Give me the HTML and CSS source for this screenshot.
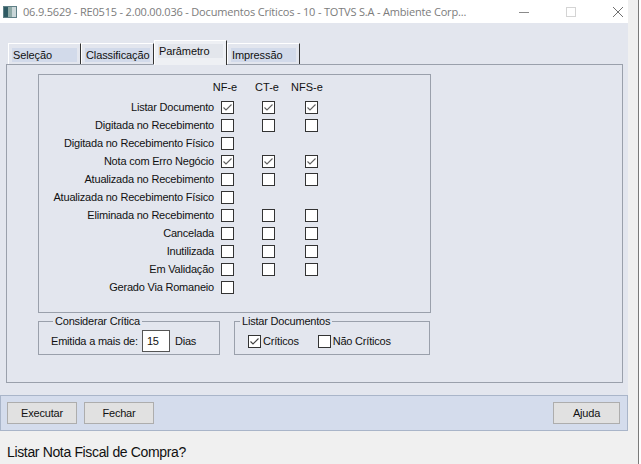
FILE: index.html
```html
<!DOCTYPE html>
<html lang="pt-BR">
<head>
<meta charset="utf-8">
<title>Documentos Críticos</title>
<link rel="stylesheet" href="styles.css">
</head>
<body>
<div class="screen">
  <div class="window">
    <div class="titlebar">
      <svg class="app-icon" width="14" height="12" viewBox="0 0 14 12">
        <rect x="0" y="0" width="14" height="12" fill="#5f7f86"/>
        <rect x="1" y="1" width="4" height="10" fill="#2f5a63"/>
        <rect x="5" y="1" width="4" height="10" fill="#8ea9a6"/>
        <rect x="9" y="1" width="4" height="10" fill="#c9d6d8"/>
      </svg>
      <span class="title">06.9.5629 - RE0515 - 2.00.00.036 - Documentos Críticos - 10 - TOTVS S.A - Ambiente Corp...</span>
      <div class="controls">
        <svg class="ctl" width="12" height="12" viewBox="0 0 12 12"><line x1="1" y1="6.5" x2="11" y2="6.5" stroke="#8a8a8a" stroke-width="1"/></svg>
        <svg class="ctl" width="12" height="12" viewBox="0 0 12 12"><rect x="1.5" y="1.5" width="9" height="9" fill="none" stroke="#d4d4d4" stroke-width="1"/></svg>
        <svg class="ctl" width="12" height="12" viewBox="0 0 12 12"><path d="M1 1 L11 11 M11 1 L1 11" stroke="#707070" stroke-width="1"/></svg>
      </div>
    </div>
    <div class="client">
      <div class="tabs">
        <div class="tab"><span class="tab-label">Seleção</span></div>
        <div class="tab"><span class="tab-label">Classificação</span></div>
        <div class="tab active"><span class="tab-label">Parâmetro</span></div>
        <div class="tab"><span class="tab-label">Impressão</span></div>
      </div>
      <div class="panel">
        <div class="group main-group">
          <div class="grid">
            <span></span>
            <span class="colhead"><span>NF-e</span></span>
            <span class="colhead"><span>CT-e</span></span>
            <span class="colhead"><span>NFS-e</span></span>

            <span class="lbl">Listar Documento</span>
            <span class="cb checked"><svg width="11" height="11" viewBox="0 0 11 11"><polyline points="1.5,5.5 4,8 9.5,2.5" fill="none" stroke="#606060" stroke-width="1.1"/></svg></span>
            <span class="cb checked"><svg width="11" height="11" viewBox="0 0 11 11"><polyline points="1.5,5.5 4,8 9.5,2.5" fill="none" stroke="#606060" stroke-width="1.1"/></svg></span>
            <span class="cb checked"><svg width="11" height="11" viewBox="0 0 11 11"><polyline points="1.5,5.5 4,8 9.5,2.5" fill="none" stroke="#606060" stroke-width="1.1"/></svg></span>

            <span class="lbl">Digitada no Recebimento</span>
            <span class="cb"></span><span class="cb"></span><span class="cb"></span>

            <span class="lbl">Digitada no Recebimento Físico</span>
            <span class="cb"></span><span></span><span></span>

            <span class="lbl">Nota com Erro Negócio</span>
            <span class="cb checked"><svg width="11" height="11" viewBox="0 0 11 11"><polyline points="1.5,5.5 4,8 9.5,2.5" fill="none" stroke="#606060" stroke-width="1.1"/></svg></span>
            <span class="cb checked"><svg width="11" height="11" viewBox="0 0 11 11"><polyline points="1.5,5.5 4,8 9.5,2.5" fill="none" stroke="#606060" stroke-width="1.1"/></svg></span>
            <span class="cb checked"><svg width="11" height="11" viewBox="0 0 11 11"><polyline points="1.5,5.5 4,8 9.5,2.5" fill="none" stroke="#606060" stroke-width="1.1"/></svg></span>

            <span class="lbl">Atualizada no Recebimento</span>
            <span class="cb"></span><span class="cb"></span><span class="cb"></span>

            <span class="lbl">Atualizada no Recebimento Físico</span>
            <span class="cb"></span><span></span><span></span>

            <span class="lbl">Eliminada no Recebimento</span>
            <span class="cb"></span><span class="cb"></span><span class="cb"></span>

            <span class="lbl">Cancelada</span>
            <span class="cb"></span><span class="cb"></span><span class="cb"></span>

            <span class="lbl">Inutilizada</span>
            <span class="cb"></span><span class="cb"></span><span class="cb"></span>

            <span class="lbl">Em Validação</span>
            <span class="cb"></span><span class="cb"></span><span class="cb"></span>

            <span class="lbl">Gerado Via Romaneio</span>
            <span class="cb"></span><span></span><span></span>
          </div>
        </div>
        <div class="bottom-groups">
          <fieldset class="fs fs-critica">
            <legend>Considerar Crítica</legend>
            <div class="fs-row">
              <span>Emitida a mais de:</span>
              <span class="input">15</span>
              <span class="dias">Dias</span>
            </div>
          </fieldset>
          <fieldset class="fs fs-listar">
            <legend>Listar Documentos</legend>
            <div class="fs-row">
              <span class="cb checked"><svg width="11" height="11" viewBox="0 0 11 11"><polyline points="1.5,5.5 4,8 9.5,2.5" fill="none" stroke="#404040" stroke-width="1.1"/></svg></span>
              <span class="opt">Críticos</span>
              <span class="cb second"></span>
              <span class="opt">Não Críticos</span>
            </div>
          </fieldset>
        </div>
      </div>
      <div class="buttonbar">
        <button class="btn">Executar</button>
        <button class="btn">Fechar</button>
        <span class="spacer"></span>
        <button class="btn btn-help">Ajuda</button>
      </div>
    </div>
    <div class="statusbar">
      <span class="status-text">Listar Nota Fiscal de Compra?</span>
    </div>
  </div>
  <div class="edge"></div>
</div>
</body>
</html>
```

FILE: styles.css
```css
* { box-sizing: border-box; }
html, body { margin: 0; padding: 0; }
body {
  width: 641px;
  height: 464px;
  overflow: hidden;
  background: #f0f0f0;
  font-family: "Liberation Sans", Arial, sans-serif;
  font-size: 11px;
  color: #111;
}
.screen {
  display: flex;
  width: 641px;
  height: 464px;
}
.window {
  width: 628px;
  height: 464px;
  display: flex;
  flex-direction: column;
}
.edge {
  width: 13px;
  height: 464px;
  background: #f0f0f0;
  border-right: 2px solid #fff;
  box-shadow: inset -1px 0 0 #7a7a7a;
}
.titlebar {
  height: 23px;
  background: #fff;
  display: flex;
  align-items: center;
  padding-left: 3px;
}
.app-icon { flex: none; margin-right: 6px; margin-top: 1px; }
.title {
  font-family: "Open Sans", "Noto Sans", sans-serif;
  font-size: 11px;
  letter-spacing: -0.18px;
  color: #7c7c7c;
  white-space: nowrap;
}
.controls {
  margin-left: auto;
  display: flex;
  align-items: center;
  gap: 35px;
  padding-right: 4px;
}
.ctl { display: block; }

.client {
  height: 408px;
  background: #e3e6ee;
  padding-top: 17px;
  display: flex;
  flex-direction: column;
}
.tabs {
  display: flex;
  align-items: flex-end;
  padding-left: 8px;
}
.tab {
  width: 73px;
  height: 21px;
  border-top: 1px solid #fff;
  border-left: 1px solid #fff;
  border-right: 1px solid #333;
  padding: 4px 3px 0 3px;
}
.tab-label {
  display: block;
  height: 14px;
  line-height: 14px;
  background: #d2daea;
  padding-left: 1px;
  letter-spacing: -0.1px;
  white-space: nowrap;
}
.tab.active {
  height: 25px;
  margin-bottom: -1px;
  background: #eef0f4;
  position: relative;
  z-index: 1;
  padding-top: 3px;
}
.tab.active .tab-label { background: #e3e6ec; }

.panel {
  margin-left: 6px;
  width: 617px;
  height: 321px;
  border: 1px solid #9aa0ab;
}
.group {
  border: 1px solid #9aa0ab;
}
.main-group {
  margin: 9px 0 0 31px;
  width: 393px;
  height: 239px;
  padding-top: 3px;
}
.grid {
  display: grid;
  grid-template-columns: 182px 41px 43px 40px;
  grid-template-rows: 20px;
  grid-auto-rows: 18px;
  align-items: center;
}
.colhead {
  width: 13px;
  height: 18px;
  align-self: start;
  display: flex;
  align-items: center;
  justify-content: center;
  white-space: nowrap;
}
.grid > .colhead:nth-child(2) span { margin-right: 5px; }
.grid > .colhead:nth-child(3) span { margin-right: 3px; }
.grid > .colhead:nth-child(4) span { margin-right: 9px; }
.lbl {
  text-align: right;
  padding-right: 7px;
  white-space: nowrap;
  letter-spacing: -0.2px;
}
.cb {
  width: 13px;
  height: 13px;
  border: 1px solid #333;
  background: #fff;
  display: flex;
  align-items: center;
  justify-content: center;
}
.cb svg { display: block; }

.bottom-groups {
  display: flex;
  margin-top: 2px;
}
.fs {
  margin: 0;
  border: 1px solid #9aa0ab;
  min-width: 0;
}
.fs legend {
  line-height: 13px;
  padding: 0 2px;
  letter-spacing: -0.2px;
}
.fs-critica {
  margin-left: 31px;
  width: 182px;
  padding: 0 4px 2px 12px;
}
.fs-critica legend { margin-left: 2px; }
.fs-listar {
  margin-left: 14px;
  width: 196px;
  padding: 0 4px 1px 13px;
}
.fs-listar legend { margin-left: -8px; }
.fs-row {
  display: flex;
  align-items: center;
  height: 22px;
  margin-top: 2px;
  letter-spacing: -0.2px;
  white-space: nowrap;
}
.input {
  width: 28px;
  height: 22px;
  margin-left: 4px;
  border: 1px solid #555;
  background: #fff;
  padding-left: 4px;
  line-height: 20px;
}
.dias { margin-left: 5px; }
.opt { margin-left: 2px; }
.cb.second { margin-left: 19px; }

.buttonbar {
  margin-top: 12px;
  height: 36px;
  background: #d4dcec;
  border: 1px solid #a9b5c9;
  display: flex;
  align-items: center;
  padding: 0 6px;
  gap: 7px;
}
.spacer { flex: 1; }
.btn {
  width: 70px;
  height: 22px;
  background: #e1e1e1;
  border: 1px solid #adadad;
  font-family: "Liberation Sans", Arial, sans-serif;
  font-size: 11px;
  letter-spacing: -0.2px;
  color: #111;
  padding: 0;
}
.btn-help { width: 67px; margin-right: 1px; }

.statusbar {
  flex: 1;
  background: #f0f0f0;
  padding: 13px 0 0 7px;
}
.status-text {
  display: block;
  font-size: 14px;
  line-height: 17px;
  letter-spacing: -0.35px;
  color: #111;
}
```
